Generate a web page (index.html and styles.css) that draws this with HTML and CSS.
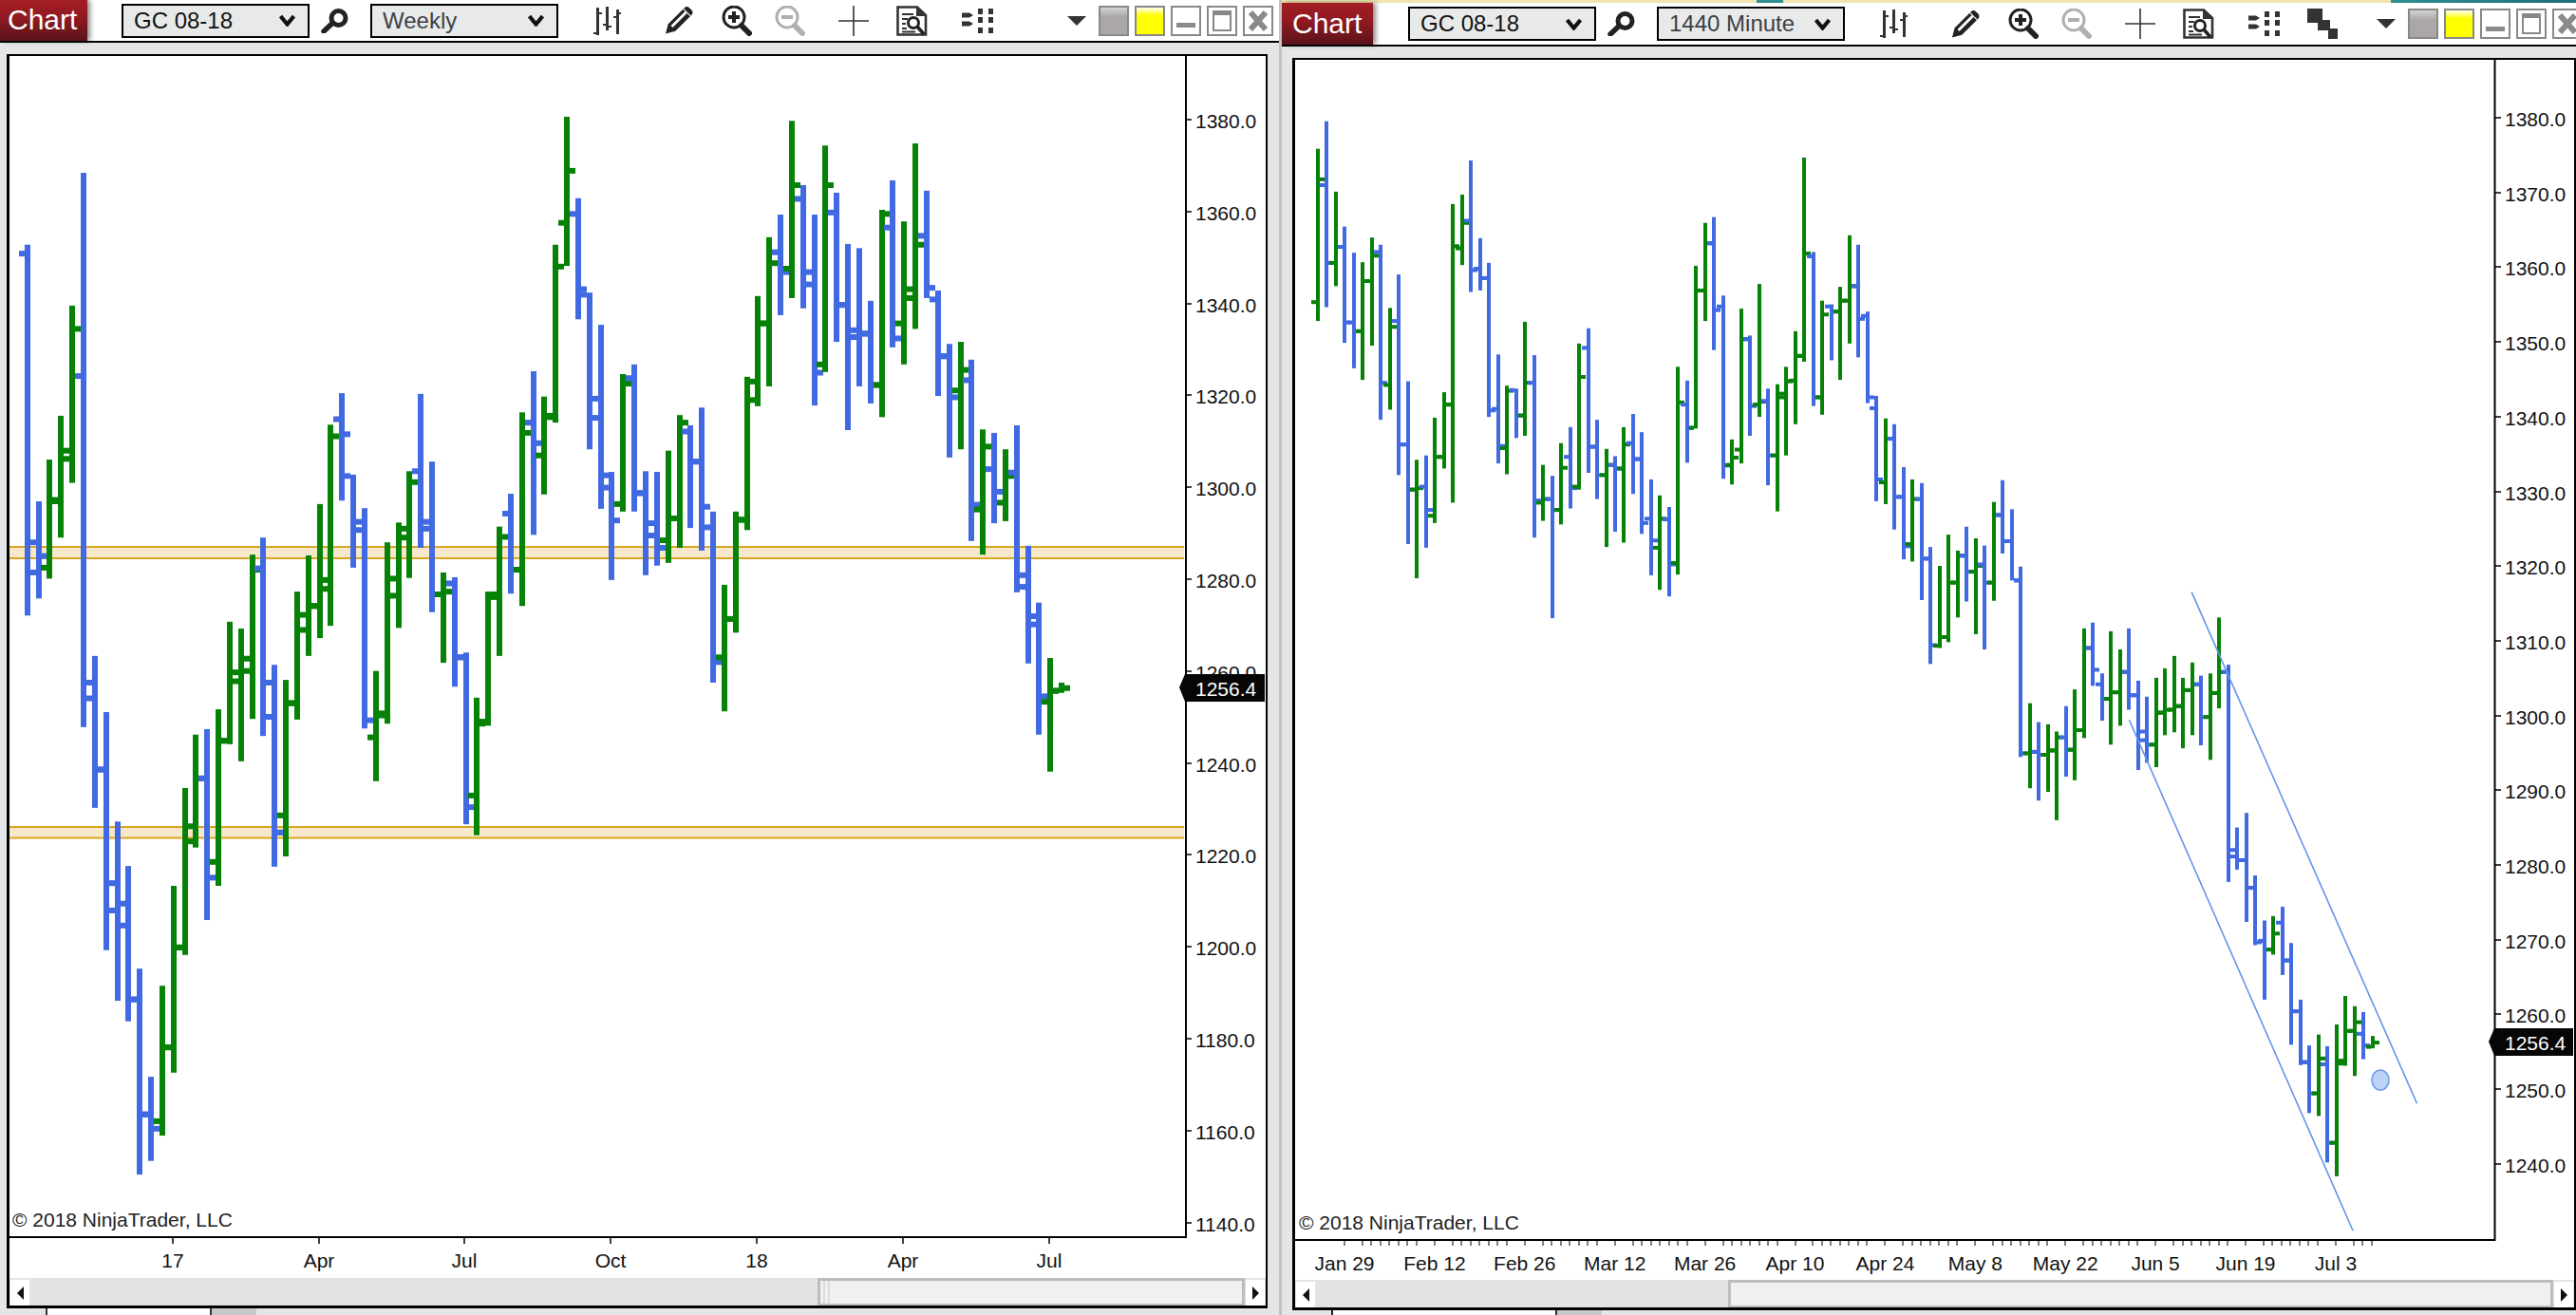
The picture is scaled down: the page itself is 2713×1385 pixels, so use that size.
FILE: index.html
```html
<!DOCTYPE html>
<html lang="en">
<head>
    <meta charset="UTF-8">
    <title>Chart</title>
    <link rel="stylesheet" href="styles.css">
</head>
<body>
    <svg class="defs" width="0" height="0">
        <symbol id="i-search" viewBox="0 0 29 26">
            <circle cx="18.5" cy="10" r="7.5" fill="none" stroke="#222" stroke-width="5"/>
            <path d="M12 15.5 L3 24" stroke="#222" stroke-width="5.5" stroke-linecap="round"/>
        </symbol>
        <symbol id="i-bars" viewBox="0 0 29 30">
            <path fill="#333" d="M3 1h3v29H3zM0 27h3v2H0zM6 6h3v2H6zM13 0h3v25h-3zM10 18h3v2h-3zM16 20h3v2h-3zM24 3h3v26h-3zM21 10h3v2h-3zM27 6h2v2h-2z"/>
        </symbol>
        <symbol id="i-pencil" viewBox="0 0 32 32">
            <path fill="#222" d="M1 31 L4 20 L22 2 Q25 -1 28 2 L30 4 Q33 7 30 10 L12 28 Z"/>
            <path d="M8 23 L24 7" stroke="#fff" stroke-width="3"/>
            <path d="M21 3 L29 11" stroke="#fff" stroke-width="1.2"/>
        </symbol>
        <symbol id="i-zoomin" viewBox="0 0 32 32">
            <circle cx="13" cy="12" r="11" fill="none" stroke="#222" stroke-width="3"/>
            <path d="M13 6v12M7 12h12" stroke="#222" stroke-width="4"/>
            <path d="M21 21 L29 29" stroke="#222" stroke-width="6" stroke-linecap="round"/>
        </symbol>
        <symbol id="i-zoomout" viewBox="0 0 32 32">
            <circle cx="13" cy="12" r="11" fill="none" stroke="#b0b0b0" stroke-width="3"/>
            <path d="M7 12h12" stroke="#b0b0b0" stroke-width="4"/>
            <path d="M21 21 L29 29" stroke="#b0b0b0" stroke-width="6" stroke-linecap="round"/>
        </symbol>
        <symbol id="i-cross" viewBox="0 0 32 32">
            <path d="M16 0v32M0 16h32" stroke="#333" stroke-width="1.6"/>
        </symbol>
        <symbol id="i-doc" viewBox="0 0 33 32">
            <path d="M1.5 1.5H22L31 10V30.5H1.5Z" fill="#fff" stroke="#333" stroke-width="2.6"/>
            <path d="M21 1.5V11H31Z" fill="#333"/>
            <path d="M6 9h12M6 14h6M6 19h4M6 24h5M6 27.5h14" stroke="#333" stroke-width="1.8"/>
            <circle cx="18" cy="18" r="5.5" fill="#fff" stroke="#222" stroke-width="3"/>
            <path d="M22 22 L29 30" stroke="#222" stroke-width="3.5"/>
        </symbol>
        <symbol id="i-dots" viewBox="0 0 33 26">
            <path fill="#333" d="M17 0h5v6h-5zM28 0h5v6h-5zM17 9h5v6h-5zM28 9h5v6h-5zM17 20h5v6h-5zM28 20h5v6h-5zM0 4.5h8l4 2.5-4 2.5H0zM0 13.5h8l4 2.5-4 2.5H0z"/>
        </symbol>
        <symbol id="i-stack" viewBox="0 0 32 32">
            <path fill="#333" d="M0 0h16v15H0zM11 15h5v-3h8v11h-13zM22 23h2v-2h8v11h-10z"/>
        </symbol>
        <symbol id="i-close" viewBox="0 0 28 28">
            <path d="M6 5 L22 23 M22 5 L6 23" stroke="#8a8a8a" stroke-width="6"/>
        </symbol>
        <symbol id="i-chevron" viewBox="0 0 17 13">
            <path d="M1.5 2 L8.5 10.5 L15.5 2" fill="none" stroke="#111" stroke-width="4.2"/>
        </symbol>
    </svg>

    <section class="panel panel-left">
        <div class="toolbar">
            <div class="chart-tab">Chart</div>
            <div class="drop drop-first"><span class="drop-text">GC 08-18</span><svg class="chevron"><use href="#i-chevron"/></svg></div>
            <svg class="ic ic-search"><use href="#i-search"/></svg>
            <div class="drop drop-second"><span class="drop-text muted">Weekly</span><svg class="chevron"><use href="#i-chevron"/></svg></div>
            <svg class="ic ic-bars"><use href="#i-bars"/></svg>
            <svg class="ic ic-pencil"><use href="#i-pencil"/></svg>
            <svg class="ic ic-zoomin"><use href="#i-zoomin"/></svg>
            <svg class="ic ic-zoomout"><use href="#i-zoomout"/></svg>
            <svg class="ic ic-cross"><use href="#i-cross"/></svg>
            <svg class="ic ic-doc"><use href="#i-doc"/></svg>
            <svg class="ic ic-dots"><use href="#i-dots"/></svg>
            <span class="menu-arrow menu-arrow-far"></span>
            <div class="win-btn swatch-grey"></div>
            <div class="win-btn swatch-yellow"></div>
            <div class="win-btn btn-min"><span></span></div>
            <div class="win-btn btn-max"><span></span></div>
            <div class="win-btn btn-close"><svg><use href="#i-close"/></svg></div>
        </div>
        <div class="chart-box">
            <svg class="chart" id="weeklyChart"></svg>
            <div class="scrollbar">
                <div class="scroll-btn"><span class="arrow-left"></span></div>
                <div class="scroll-track track-left"><div class="thumb"><i></i><i></i></div></div>
                <div class="scroll-btn"><span class="arrow-right"></span></div>
            </div>
        </div>
        <div class="tab-strip"><div class="strip-tab"></div><div class="strip-rest"></div></div>
    </section>

    <div class="divider"></div>

    <section class="panel panel-right">
        <div class="desktop-edge"></div>
        <div class="toolbar">
            <div class="chart-tab">Chart</div>
            <div class="drop drop-first"><span class="drop-text">GC 08-18</span><svg class="chevron"><use href="#i-chevron"/></svg></div>
            <svg class="ic ic-search"><use href="#i-search"/></svg>
            <div class="drop drop-second"><span class="drop-text muted">1440 Minute</span><svg class="chevron"><use href="#i-chevron"/></svg></div>
            <svg class="ic ic-bars"><use href="#i-bars"/></svg>
            <svg class="ic ic-pencil"><use href="#i-pencil"/></svg>
            <svg class="ic ic-zoomin"><use href="#i-zoomin"/></svg>
            <svg class="ic ic-zoomout"><use href="#i-zoomout"/></svg>
            <svg class="ic ic-cross"><use href="#i-cross"/></svg>
            <svg class="ic ic-doc"><use href="#i-doc"/></svg>
            <svg class="ic ic-dots"><use href="#i-dots"/></svg>
            <svg class="ic ic-stack"><use href="#i-stack"/></svg>
            <span class="menu-arrow menu-arrow-near"></span>
            <div class="win-btn swatch-grey"></div>
            <div class="win-btn swatch-yellow"></div>
            <div class="win-btn btn-min"><span></span></div>
            <div class="win-btn btn-max"><span></span></div>
            <div class="win-btn btn-close"><svg><use href="#i-close"/></svg></div>
        </div>
        <div class="chart-box">
            <svg class="chart" id="dailyChart"></svg>
            <div class="scrollbar">
                <div class="scroll-btn"><span class="arrow-left"></span></div>
                <div class="scroll-track track-right"><div class="thumb"></div></div>
                <div class="scroll-btn"><span class="arrow-right"></span></div>
            </div>
        </div>
        <div class="tab-strip"><div class="strip-tab"></div><div class="strip-rest"></div></div>
    </section>

    <script src="chart.js"></script>
</body>
</html>
```

FILE: styles.css
```css
* {
    margin: 0;
    padding: 0;
    box-sizing: border-box;
}

body {
    font-family: "Liberation Sans", Arial, sans-serif;
    background-color: #e4e5e7;
    display: flex;
    height: 100vh;
    overflow: hidden;
}

.defs {
    position: absolute;
}

.panel {
    display: flex;
    flex-direction: column;
    height: 100%;
    overflow: hidden;
}

.panel-left {
    width: 1347px;
    flex: none;
}

.panel-right {
    flex: 1;
    min-width: 0;
}

.divider {
    width: 3px;
    flex: none;
    background-color: #c3c3c5;
}

.desktop-edge {
    height: 3px;
    flex: none;
    background: linear-gradient(to right, #efe4ae 500px, #2f8f8f 500px, #2f8f8f 528px, #efe4ae 528px, #efe4ae 1168px, #2f8f8f 1168px, #1d6f78);
}

/* toolbar */
.toolbar {
    display: flex;
    align-items: center;
    flex: none;
    background-color: #fff;
    border-bottom: 2px solid #000;
}

.panel-left .toolbar {
    height: 45px;
}

.panel-right .toolbar {
    height: 46px;
}

.chart-tab {
    align-self: stretch;
    flex: none;
    width: 92px;
    padding-left: 8px;
    color: #fff;
    font-size: 30px;
    line-height: 41px;
    background: linear-gradient(to bottom, #a51d25, #8f1a20 45%, #59131a);
    box-shadow: 3px 0 5px rgba(0, 0, 0, 0.45);
}

.panel-right .chart-tab {
    width: 96px;
    padding-left: 11px;
    line-height: 44px;
}

.drop {
    display: flex;
    align-items: center;
    justify-content: space-between;
    flex: none;
    width: 198px;
    height: 36px;
    padding: 0 13px 0 11px;
    background-color: #e8eaea;
    border: 2px solid #000;
    font-size: 24px;
    color: #111;
}

.drop-first {
    margin-left: 36px;
}

.panel-right .drop-first {
    margin-left: 37px;
}

.drop-second {
    margin-left: 23px;
}

.muted {
    color: #3c4045;
}

.chevron {
    width: 17px;
    height: 13px;
    flex: none;
}

.ic {
    flex: none;
}

.ic-search {
    width: 29px;
    height: 26px;
    margin-left: 12px;
}

.ic-bars {
    width: 29px;
    height: 30px;
    margin-left: 37px;
}

.ic-pencil {
    width: 30px;
    height: 31px;
    margin-left: 46px;
}

.ic-zoomin {
    width: 32px;
    height: 32px;
    margin-left: 30px;
}

.ic-zoomout {
    width: 32px;
    height: 32px;
    margin-left: 24px;
}

.ic-cross {
    width: 32px;
    height: 32px;
    margin-left: 35px;
}

.ic-doc {
    width: 33px;
    height: 32px;
    margin-left: 29px;
}

.ic-dots {
    width: 33px;
    height: 26px;
    margin-left: 36px;
}

.ic-stack {
    width: 32px;
    height: 32px;
    margin-left: 29px;
}

.menu-arrow {
    flex: none;
    width: 0;
    height: 0;
    border-left: 10px solid transparent;
    border-right: 10px solid transparent;
    border-top: 10px solid #333;
}

.menu-arrow-far {
    margin-left: 78px;
}

.menu-arrow-near {
    margin-left: 41px;
}

.win-btn {
    flex: none;
    display: flex;
    align-items: center;
    justify-content: center;
    width: 32px;
    height: 32px;
    margin-left: 6px;
    background-color: #fff;
    border: 2px solid #888;
}

.menu-arrow + .win-btn {
    margin-left: 13px;
}

.swatch-grey {
    background: linear-gradient(to bottom, #d4d4d4, #aba7a7 35%);
}

.swatch-yellow {
    background: linear-gradient(to bottom, #fffff0, #ffff00 30%);
}

.btn-min span {
    width: 20px;
    height: 5px;
    margin-top: 10px;
    background-color: #8a8a8a;
}

.btn-max span {
    width: 20px;
    height: 22px;
    background-color: #fff;
    border: 2px solid #888;
    border-top-width: 5px;
}

.btn-close svg {
    width: 28px;
    height: 28px;
}

/* chart box */
.chart-box {
    display: flex;
    flex-direction: column;
    flex: 1;
    min-height: 0;
    border-style: solid;
    border-color: #000;
    border-width: 2px 2px 3px 3px;
    background-color: #fff;
}

.panel-left .chart-box {
    margin: 12px 12px 0 7px;
}

.panel-right .chart-box {
    margin: 12px 0 0 11px;
}

.chart {
    display: block;
    flex: 1;
    width: 100%;
    min-height: 0;
}

.axis-text {
    font-family: "Liberation Sans", Arial, sans-serif;
    font-size: 21px;
    fill: #111;
}

.axis-text-last {
    fill: #fff;
}

.copyright {
    font-family: "Liberation Sans", Arial, sans-serif;
    font-size: 21px;
    fill: #222;
}

/* scrollbar */
.scrollbar {
    display: flex;
    flex: none;
    height: 29px;
    background-color: #e3e3e3;
}

.scroll-btn {
    display: flex;
    align-items: center;
    justify-content: center;
    flex: none;
    width: 20px;
    margin: 2px 1px 0;
    background-color: #fff;
}

.arrow-left,
.arrow-right {
    width: 0;
    height: 0;
    border-top: 7px solid transparent;
    border-bottom: 7px solid transparent;
}

.arrow-left {
    border-right: 7px solid #111;
}

.arrow-right {
    border-left: 7px solid #111;
}

.scroll-track {
    display: flex;
    justify-content: flex-end;
    flex: 1;
    min-width: 0;
}

.thumb {
    display: flex;
    gap: 3px;
    padding-left: 3px;
    height: 100%;
    background-color: #f0f0f0;
    border: 3px solid #bdbdbd;
    border-bottom-width: 2px;
}

.track-left .thumb {
    width: 450px;
}

.track-right .thumb {
    width: 869px;
}

.thumb i {
    display: block;
    width: 2px;
    background-color: #dcdcdc;
}

/* strip below the chart */
.tab-strip {
    display: flex;
    flex: none;
}

.panel-left .tab-strip {
    height: 7px;
    padding-left: 48px;
}

.panel-right .tab-strip {
    height: 5px;
    padding-left: 52px;
}

.strip-tab {
    background-color: #fff;
    border-left: 2px solid #333;
    border-right: 2px solid #333;
}

.panel-left .strip-tab {
    width: 175px;
}

.panel-right .strip-tab {
    width: 238px;
    border-left: 2px solid #222;
}

.strip-rest {
    width: 47px;
    background-color: #c8c8c8;
}
```

FILE: chart.js
```js
// values below are read off the chart in pixels, scale/origin turn them into page coordinates
const NS = 'http://www.w3.org/2000/svg';
const BLUE = '#4169e1';
const GREEN = '#068206';

// colour, high, low, open, close
const weeklyBars = [
    ['b',205,747,218,684],['b',580,722,640,660],['g',519,693,677,578],['g',455,633,580,506],['g',294,553,518,328],['b',100,910,397,845],['b',806,1028,868,972],['b',888,1236,972,1178],['b',1048,1310,1138,1168],['b',1113,1340,1200,1308],
    ['b',1263,1564,1308,1476],['b',1421,1544,1476,1497],['g',1288,1507,1486,1378],['g',1142,1415,1378,1232],['g',999,1243,1232,1055],['g',921,1086,1077,985],['b',913,1192,985,1130],['g',884,1142,1107,930],['g',756,935,930,843],['g',766,960,830,828],
    ['g',658,898,810,680],['b',633,923,678,895],['b',819,1114,845,1064],['g',841,1099,1039,875],['g',712,899,875,746],['g',659,806,768,733],['g',584,780,733,695],['g',468,762,708,485],['b',422,579,460,482],['b',541,677,543,622],
    ['b',590,912,610,900],['g',828,989,925,890],['g',640,905,893,693],['g',611,765,718,620],['g',536,692,633,552],['b',423,648,536,610],['b',522,742,620,716],['g',684,816,716,712],['b',691,851,700,808],['b',801,1052,808,1027],
    ['g',867,1068,1010,905],['g',712,908,902,720],['g',617,806,716,632],['b',569,715,598,680],['g',450,733,680,480],['b',390,629,465,495],['g',427,570,513,457],['g',205,465,455,237],['g',18,236,173,97],['b',137,314,160,270],
    ['b',275,504,278,430],['b',322,591,458,560],['b',537,695,542,608],['g',394,595,584,408],['b',380,595,400,568],['b',536,688,568,630],['b',537,674,612,648],['g',506,670,637,605],['g',454,648,605,465],['b',469,619,478,522],
    ['b',443,652,522,618],['b',595,845,588,815],['g',702,887,808,752],['g',595,772,752,607],['g',398,622,607,432],['g',280,441,405,320],['g',194,412,320,232],['b',161,308,216,245],['g',24,283,240,118],['b',118,298,138,263],
    ['b',161,440,245,392],['g',60,391,380,118],['b',129,347,158,293],['b',204,476,293,340],['b',210,412,330,335],['b',287,437,335,410],['g',154,457,410,160],['b',111,355,180,342],['g',171,380,320,283],['g',57,328,270,205],
    ['b',126,283,192,268],['b',272,426,285,368],['b',350,516,368,428],['g',347,504,418,388],['b',373,638,403,585],['g',475,658,592,500],['b',480,612,533,566],['g',504,609,582,543],['b',469,713,538,688],['b',645,817,705,748],
    ['b',728,921,760,865],['g',809,975,873,857],['g',845,860,857,853]
];

const dailyBars = [
    ['g',48,285,259,90],['b',10,266,98,205],['g',107,237,205,183],['b',155,315,183,287],['b',191,350,287,299],['g',204,366,299,230],['g',170,319,230,195],['b',180,421,190,370],['g',267,407,373,293],['b',221,497,285,455],
    ['b',368,592,455,517],['g',476,639,517,515],['b',470,597,513,545],['g',418,563,553,472],['g',383,488,472,400],['g',124,535,400,182],['g',111,208,185,150],['b',64,245,147,215],['b',171,243,213,226],['b',205,417,226,408],
    ['b',331,481,406,457],['g',374,496,460,381],['b',378,446,380,415],['g',286,443,415,370],['b',332,583,370,532],['g',483,560,535,530],['b',498,694,530,545],['g',453,565,545,487],['b',431,543,472,515],['g',316,517,513,362],
    ['b',295,494,322,458],['b',421,530,458,497],['g',461,596,497,483],['b',471,575,483,488],['g',431,590,488,455],['b',413,523,453,475],['b',438,578,475,563],['b',503,635,557,587],['g',525,655,597,557],['b',541,664,558,620],
    ['g',348,634,618,397],['b',367,480,400,432],['g',209,433,432,243],['g',150,285,243,178],['b',142,325,178,270],['b',250,502,265,484],['g',448,510,483,473],['g',268,481,462,310],['b',305,443,310,402],['g',234,417,400,396],
    ['b',378,511,395,470],['g',372,547,470,385],['g',348,470,390,368],['g',299,427,367,333],['g',60,341,333,192],['b',190,402,196,390],['g',257,414,390,276],['b',262,339,265,272],['g',238,366,272,257],['g',167,316,257,237],
    ['b',180,335,237,282],['b',272,398,278,390],['b',388,533,405,503],['g',419,537,507,447],['b',427,572,447,527],['b',486,613,527,595],['g',503,616,592,530],['b',508,669,530,612],['b',596,757,612,731],['g',622,735,732,720],
    ['g',579,727,720,645],['g',601,693,645,608],['b',568,671,608,630],['g',584,716,630,622],['b',594,737,620,645],['g',534,670,645,552],['b',504,605,552,588],['b',544,642,588,642],['b',623,885,642,880],['g',811,928,880,878],
    ['b',837,945,878,882],['g',840,933,882,876],['g',850,972,876,858],['b',815,912,858,875],['g',792,917,875,848],['g',708,859,848,735],['b',700,787,735,765],['b',770,835,785,805],['g',712,868,805,796],['g',737,842,796,768],
    ['b',708,820,768,800],['b',780,903,800,850],['b',802,893,862,868],['g',776,899,868,824],['g',763,855,824,820],['g',746,851,820,815],['g',776,873,815,793],['g',755,855,793,785],['b',773,869,785,830],['g',770,889,830,797],
    ['g',693,818,797,768],['b',758,1057,768,1013],['b',982,1040,1022,1027],['b',962,1112,1027,1065],['b',1048,1144,1065,1140],['b',1110,1219,1138,1150],['g',1104,1157,1150,1128],['b',1091,1185,1113,1165],['b',1141,1281,1165,1235],['b',1219,1309,1235,1305],
    ['b',1282,1375,1305,1348],['g',1267,1379,1348,1300],['b',1283,1443,1308,1416],['g',1253,1462,1416,1303],['g',1214,1310,1307,1262],['g',1228,1324,1262,1250],['b',1236,1301,1266,1282],['g',1269,1286,1284,1278]
];

function add(svg, tag, attrs, text) {
    const el = document.createElementNS(NS, tag);
    for (const key in attrs) {
        el.setAttribute(key, attrs[key]);
    }
    if (text) {
        el.textContent = text;
    }
    svg.appendChild(el);
    return el;
}

function drawBars(svg, bars, opt) {
    bars.forEach(function (bar, i) {
        const color = bar[0] === 'g' ? GREEN : BLUE;
        const x = Math.round(opt.x0 + i * opt.step);
        const y = function (v) { return opt.y0 + v / opt.scale; };
        const half = opt.stem / 2;
        add(svg, 'rect', { x: x - half, y: y(bar[1]), width: opt.stem, height: y(bar[2]) - y(bar[1]), fill: color });
        add(svg, 'rect', { x: x - half - opt.tick, y: y(bar[3]) - opt.tickH / 2, width: opt.tick, height: opt.tickH, fill: color });
        add(svg, 'rect', { x: x + half, y: y(bar[4]) - opt.tickH / 2, width: opt.tick, height: opt.tickH, fill: color });
    });
}

function drawFrame(svg, plotRight, plotBottom) {
    add(svg, 'path', { d: 'M' + plotRight + ' 0V' + plotBottom + 'H0', fill: 'none', stroke: '#000', 'stroke-width': 2 });
}

function drawPriceAxis(svg, opt) {
    for (let v = opt.from; v >= opt.to; v -= opt.by) {
        const y = Math.round(opt.top + (opt.from - v) * opt.perPoint);
        add(svg, 'path', { d: 'M' + opt.right + ' ' + y + 'h6', stroke: '#000', 'stroke-width': 1.5 });
        add(svg, 'text', { x: opt.right + 10, y: y + 9, class: 'axis-text' }, v.toFixed(1));
    }
}

function drawLastPrice(svg, left, top, width) {
    const pts = [left, top + 14, left + 6, top, left + width, top, left + width, top + 29, left + 6, top + 29];
    add(svg, 'polygon', { points: pts.join(' '), fill: '#060606' });
    add(svg, 'text', { x: left + 17, y: top + 23, class: 'axis-text axis-text-last' }, '1256.4');
}

function drawTime(svg, labels, labelY, tickY) {
    labels.forEach(function (item) {
        add(svg, 'path', { d: 'M' + item[1] + ' ' + tickY + 'v6', stroke: '#000', 'stroke-width': 1.5 });
        add(svg, 'text', { x: item[1], y: labelY, 'text-anchor': 'middle', class: 'axis-text' }, item[0]);
    });
}

function drawWeekly() {
    const svg = document.getElementById('weeklyChart');
    svg.setAttribute('viewBox', '10 59 1323 1287');

    [[576, 588], [871, 882.5]].forEach(function (zone) {
        add(svg, 'rect', { x: 10, y: zone[0], width: 1237, height: zone[1] - zone[0], fill: '#f7e8cb' });
        add(svg, 'path', { d: 'M10 ' + zone[0] + 'H1247M10 ' + zone[1] + 'H1247', stroke: '#daa520', 'stroke-width': 2 });
    });

    drawBars(svg, weeklyBars, { x0: 28.8, step: 11.84, y0: 110, scale: 1.3876, stem: 6, tick: 6, tickH: 6 });
    add(svg, 'text', { x: 13, y: 1292, class: 'copyright' }, '\u00a9 2018 NinjaTrader, LLC');
    drawFrame(svg, 1249, 1303);
    drawPriceAxis(svg, { from: 1380, to: 1140, by: 20, top: 126, perPoint: 4.84, right: 1249 });
    drawLastPrice(svg, 1242, 710, 90);
    drawTime(svg, [['17', 182], ['Apr', 336], ['Jul', 489], ['Oct', 643], ['18', 797], ['Apr', 951], ['Jul', 1105]], 1335, 1304);
}

function drawDaily() {
    const svg = document.getElementById('dailyChart');
    svg.setAttribute('viewBox', '1364 63 1347 1285');

    drawBars(svg, dailyBars, { x0: 1387.6, step: 9.497, y0: 120, scale: 1.3067, stem: 4, tick: 5, tickH: 4 });

    // trend channel
    add(svg, 'path', { d: 'M2308.2 623.6L2545.5 1162.3M2242.4 758.2L2478.1 1296.2', stroke: '#6495ed', 'stroke-width': 1.6 });
    add(svg, 'ellipse', { cx: 2507, cy: 1137.5, rx: 9, ry: 10.5, fill: '#bdd2f5', stroke: '#6f9bea', 'stroke-width': 1.6 });

    add(svg, 'text', { x: 1368, y: 1295, class: 'copyright' }, '\u00a9 2018 NinjaTrader, LLC');
    drawFrame(svg, 2627.5, 1306);
    drawPriceAxis(svg, { from: 1380, to: 1240, by: 10, top: 124, perPoint: 7.87, right: 2628 });
    drawLastPrice(svg, 2621, 1083, 89);

    const names = ['Jan 29', 'Feb 12', 'Feb 26', 'Mar 12', 'Mar 26', 'Apr 10', 'Apr 24', 'May 8', 'May 22', 'Jun 5', 'Jun 19', 'Jul 3'];
    names.forEach(function (name, i) {
        const major = 1416 + i * 94.9;
        add(svg, 'text', { x: major, y: 1338, 'text-anchor': 'middle', class: 'axis-text' }, name);
    });
    // one tick per session, two missing around each date
    for (let k = 0; k <= 114; k++) {
        if (k % 10 === 1 || k % 10 === 9) {
            continue;
        }
        add(svg, 'path', { d: 'M' + Math.round(1416 + k * 9.49) + ' 1307v5', stroke: '#000', 'stroke-width': 1 });
    }
}

drawWeekly();
drawDaily();
```
